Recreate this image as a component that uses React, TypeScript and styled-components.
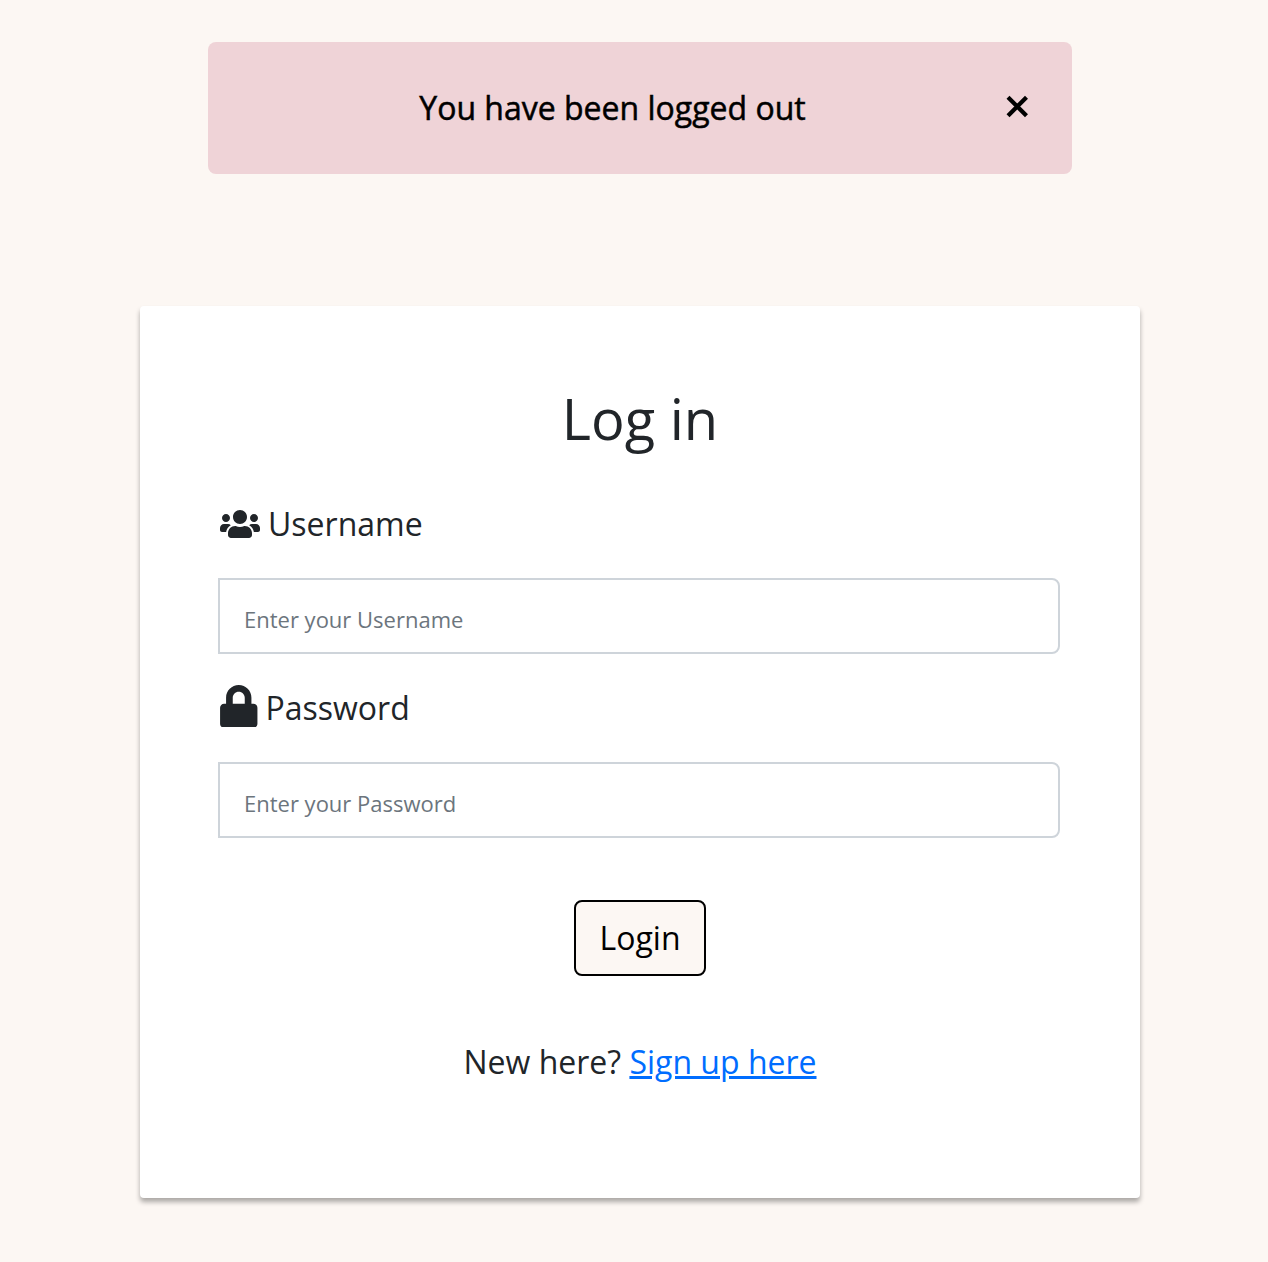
import React from "react";
import styled, { createGlobalStyle } from "styled-components";
import { FaUsers, FaLock } from "react-icons/fa";

const GlobalStyle = createGlobalStyle`
  *, *::before, *::after { box-sizing: border-box; }
  body {
    margin: 0;
    background: #fcf7f3;
    color: #212529;
    font-family: "Open Sans", sans-serif;
    font-size: 32px;
    line-height: 48px;
  }
`;

const Page = styled.main`
  min-height: 1262px;
  padding: 42px 128px 64px 140px;
  display: flex;
  flex-direction: column;
  align-items: center;
  gap: 132px;
`;

const Alert = styled.div`
  width: 864px;
  height: 132px;
  padding: 0 40px 0 32px;
  display: flex;
  align-items: center;
  border-radius: 8px;
  background: #efd3d7;
  color: #000;
`;

const AlertText = styled.span`
  flex: 1;
  padding-right: 17px;
  text-align: center;
  -webkit-text-stroke: 0.5px #000;
`;

const CloseButton = styled.button`
  width: 30px;
  height: 30px;
  padding: 0;
  display: grid;
  place-items: center;
  border: 0;
  background: none;
  color: inherit;
  margin-bottom: 2px;
`;

const Card = styled.section`
  width: 1000px;
  height: 892px;
  padding: 78px 80px 0 78px;
  border-radius: 4px;
  background: #fff;
  box-shadow: 0 4px 5px rgba(0, 0, 0, 0.32);
`;

const Title = styled.h1`
  margin: 0 0 48px;
  padding-left: 2px;
  text-align: center;
  font-size: 56px;
  line-height: 68px;
  font-weight: 400;
`;

const Form = styled.form`
  display: flex;
  flex-direction: column;
`;

const Field = styled.div`
  height: 184px;
`;

const Label = styled.label`
  height: 48px;
  margin-bottom: 30px;
  padding-left: 2px;
  display: flex;
  align-items: center;
  gap: 8px;
`;

const LockIcon = styled(FaLock)`
  width: 37.5px;
  height: 42.7px;
  margin-bottom: 4px;
`;

const Input = styled.input`
  display: block;
  width: 842px;
  height: 76px;
  padding: 5px 24px 0;
  border: 2px solid #ced4da;
  border-radius: 0 8px 8px 0;
  background: #fff;
  font: 22px "Open Sans", sans-serif;
  &::placeholder { color: #6c757d; opacity: 1; }
`;

const LoginButton = styled.button`
  align-self: center;
  width: 132px;
  height: 76px;
  margin: 32px 0 62px 2px;
  padding: 0;
  border: 2px solid #000;
  border-radius: 8px;
  background: #fcf7f3;
  color: #000;
  font: 32px/48px "Open Sans", sans-serif;
`;

const Prompt = styled.p`
  margin: 0;
  padding-left: 2px;
  text-align: center;
`;

const SignUp = styled.a`
  color: #006dff;
  text-decoration: underline;
`;

export default function App() {
  return (
    <>
      <GlobalStyle />
      <Page>
        <Alert role="alert">
          <AlertText>You have been logged out</AlertText>
          <CloseButton type="button" aria-label="Close">
            <svg width="24" height="24" viewBox="0 0 24 24" fill="none" stroke="currentColor" strokeWidth="4.2" strokeLinecap="square">
              <path d="M4.5 3.8 20 19.3M20 3.8 4.5 19.3" />
            </svg>
          </CloseButton>
        </Alert>
        <Card>
          <Title>Log in</Title>
          <Form>
            <Field>
              <Label htmlFor="username">
                <FaUsers size={40} />
                Username
              </Label>
              <Input id="username" placeholder="Enter your Username" />
            </Field>
            <Field>
              <Label htmlFor="password">
                <LockIcon />
                Password
              </Label>
              <Input id="password" type="password" placeholder="Enter your Password" />
            </Field>
            <LoginButton type="button">Login</LoginButton>
          </Form>
          <Prompt>
            New here? <SignUp href="#">Sign up here</SignUp>
          </Prompt>
        </Card>
      </Page>
    </>
  );
}
